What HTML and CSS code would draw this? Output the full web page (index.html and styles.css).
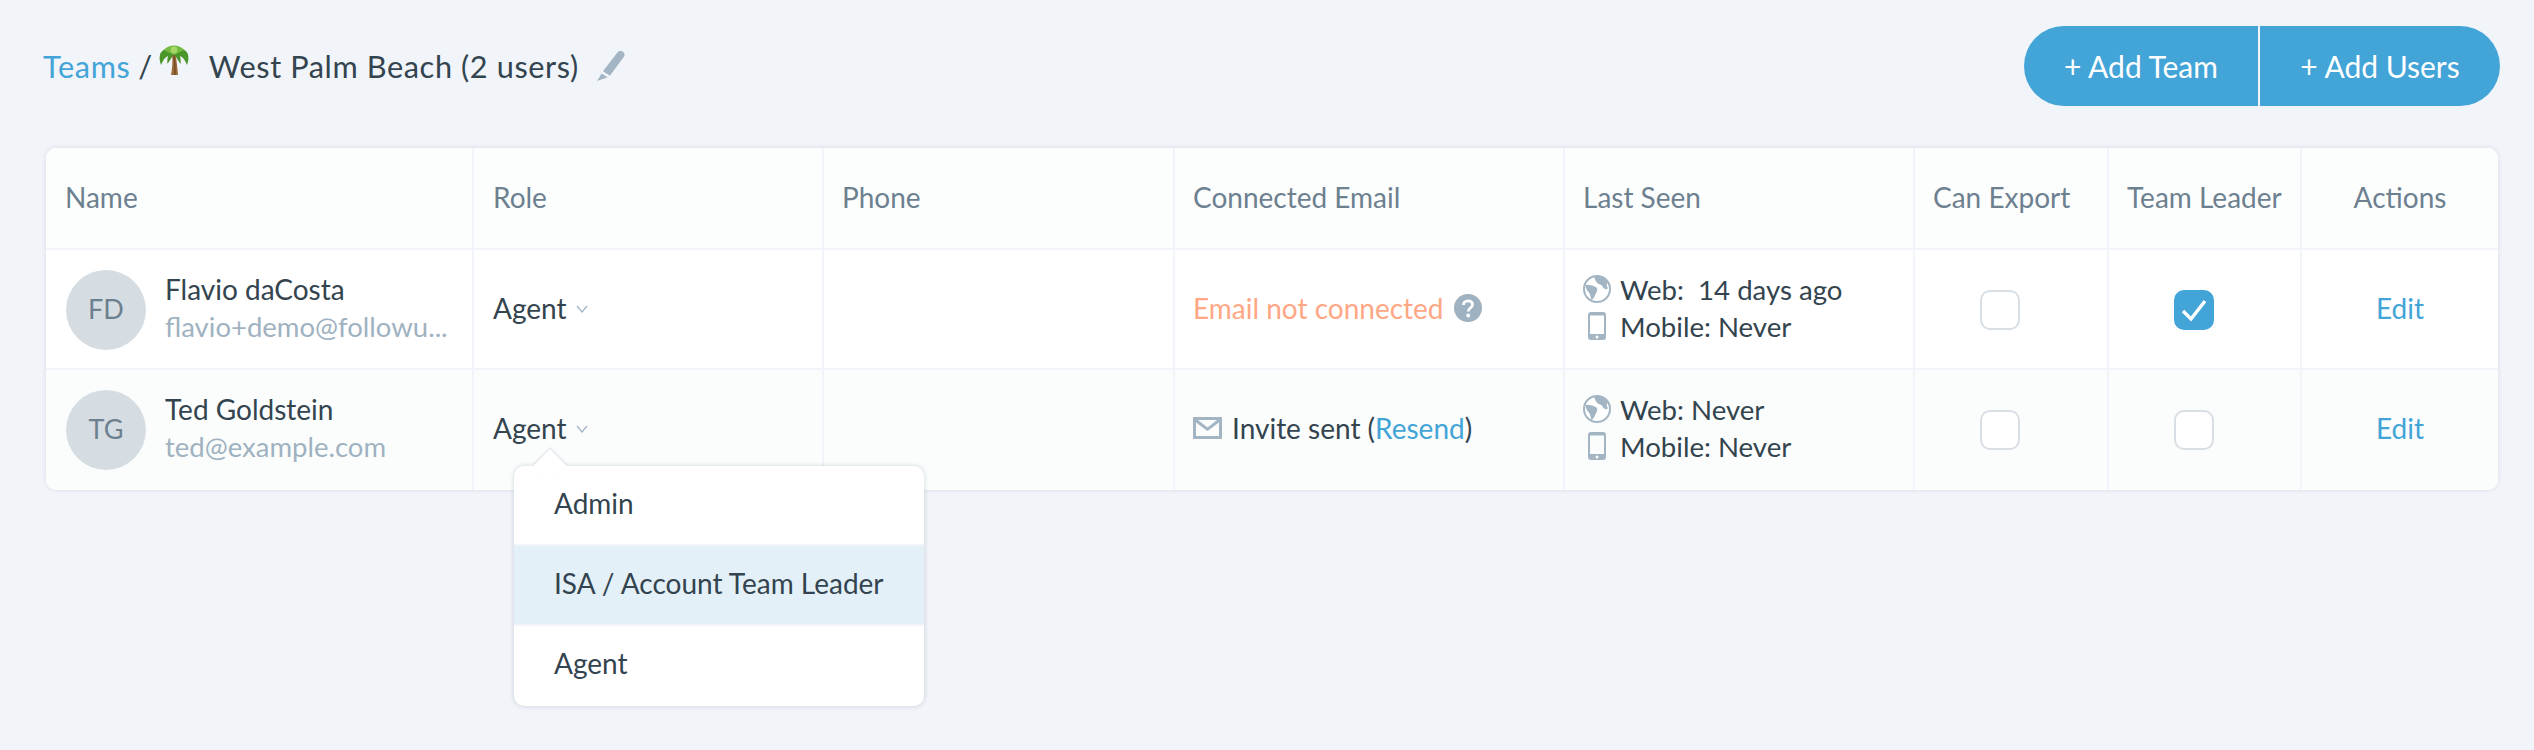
FILE: index.html
```html
<!DOCTYPE html>
<html lang="en">
<head>
    <meta charset="UTF-8">
    <title>Teams</title>
    <link rel="stylesheet" href="styles.css">
</head>
<body>
<div class="page">
    <div class="top-bar">
        <div class="crumbs">
            <a class="link" href="#">Teams</a>
            <span class="slash">/</span>
            <svg class="palm" viewBox="0 0 30 32">
                <path d="M13 10 C14 17 13 25 12 31 L19 31 C18.5 24 17.5 16 16.5 10 Z" fill="#9a6a3a"/>
                <path d="M15 11 C16 18 16 25 16 31" stroke="#6f4520" stroke-width="1.2" fill="none"/>
                <path d="M15 8 C11 3 5 4 1.5 9 C0 13 0.5 17 2 21 C4 16 6 13 9 12 C8.5 15 8 17 8.5 20 C11 16 13 13 15 10 Z" fill="#4a962a"/>
                <path d="M15 8 C19 3 25 4 28.5 9 C30 13 29.5 17 28 21 C26 16 24 13 21 12 C21.5 15 22 17 21.5 20 C19 16 17 13 15 10 Z" fill="#4a962a"/>
                <path d="M5 6 C9 0 21 0 25 6 C22 8 18 9 15 11 C12 9 8 8 5 6 Z" fill="#74bb42"/>
                <circle cx="15" cy="6" r="3.4" fill="#a3d76a"/>
            </svg>
            <span class="team-name">West Palm Beach (2 users)</span>
            <svg class="pencil" viewBox="0 0 28 28">
                <path d="M20 1.5 a3.6 3.6 0 0 1 6.2 3.6 L13 23 L6.5 19 Z" fill="#a3b5c3"/>
                <path d="M5.3 21 L10.8 24.4 L1 28 Z" fill="#a3b5c3"/>
            </svg>
        </div>
        <div class="btn-group">
            <button class="btn btn-team">+ Add Team</button>
            <button class="btn btn-users">+ Add Users</button>
        </div>
    </div>

    <div class="table-wrap">
    <table class="users">
        <colgroup>
            <col class="c-name"><col class="c-role"><col class="c-phone"><col class="c-email">
            <col class="c-seen"><col class="c-export"><col class="c-leader"><col class="c-actions">
        </colgroup>
        <thead>
            <tr>
                <th>Name</th>
                <th>Role</th>
                <th>Phone</th>
                <th>Connected Email</th>
                <th>Last Seen</th>
                <th>Can Export</th>
                <th>Team Leader</th>
                <th class="center">Actions</th>
            </tr>
        </thead>
        <tbody>
            <tr>
                <td class="no-nudge">
                    <div class="person">
                        <div class="avatar">FD</div>
                        <div class="who">
                            <div class="line">Flavio daCosta</div>
                            <div class="line muted">flavio+demo@followu...</div>
                        </div>
                    </div>
                </td>
                <td>
                    <span class="role">Agent
                        <svg class="chevron" viewBox="0 0 12 8"><path d="M1 1 L6 7 L11 1" fill="none" stroke="#a3b5c3" stroke-width="1.3"/></svg>
                    </span>
                </td>
                <td></td>
                <td>
                    <div class="mail-state">
                        <span class="warn">Email not connected</span>
                        <svg class="help" viewBox="0 0 28 28">
                            <circle cx="14" cy="14" r="14" fill="#9fb2c1"/>
                            <path d="M9.5 11 C9.5 5.5 18.5 5.5 18.5 10.5 C18.5 14 14.2 14 14.2 17.5" fill="none" stroke="#fff" stroke-width="2.8"/>
                            <circle cx="14.2" cy="21.5" r="1.9" fill="#fff"/>
                        </svg>
                    </div>
                </td>
                <td>
                    <div class="line seen"><svg class="globe" viewBox="0 0 28 28"><use href="#globe-art"/></svg><span>Web:&nbsp; 14 days ago</span></div>
                    <div class="line seen"><svg class="mobile" viewBox="0 0 28 28"><use href="#phone-art"/></svg><span>Mobile: Never</span></div>
                </td>
                <td class="check-cell"><span class="check"></span></td>
                <td class="check-cell">
                    <span class="check on">
                        <svg viewBox="0 0 40 40"><path d="M9 21 L17 29 L31 11" fill="none" stroke="#fff" stroke-width="3.4"/></svg>
                    </span>
                </td>
                <td class="center"><a class="link" href="#">Edit</a></td>
            </tr>
            <tr class="alt">
                <td class="no-nudge">
                    <div class="person">
                        <div class="avatar">TG</div>
                        <div class="who">
                            <div class="line">Ted Goldstein</div>
                            <div class="line muted">ted@example.com</div>
                        </div>
                    </div>
                </td>
                <td>
                    <span class="role">Agent
                        <svg class="chevron" viewBox="0 0 12 8"><path d="M1 1 L6 7 L11 1" fill="none" stroke="#a3b5c3" stroke-width="1.3"/></svg>
                    </span>
                </td>
                <td></td>
                <td>
                    <div class="mail-state">
                        <svg class="envelope" viewBox="0 0 29 22">
                            <path d="M0 0 H29 V22 H0 Z M3 5.5 V19 H26 V5.5 L14.5 14 Z M5 3 L14.5 10.5 L24 3 Z" fill="#a3b5c3" fill-rule="evenodd"/>
                        </svg>
                        <span>Invite sent (<a class="link" href="#">Resend</a>)</span>
                    </div>
                </td>
                <td>
                    <div class="line seen"><svg class="globe" viewBox="0 0 28 28"><use href="#globe-art"/></svg><span>Web: Never</span></div>
                    <div class="line seen"><svg class="mobile" viewBox="0 0 28 28"><use href="#phone-art"/></svg><span>Mobile: Never</span></div>
                </td>
                <td class="check-cell"><span class="check"></span></td>
                <td class="check-cell"><span class="check"></span></td>
                <td class="center"><a class="link" href="#">Edit</a></td>
            </tr>
        </tbody>
    </table>
    <div class="menu">
        <div class="menu-item">Admin</div>
        <div class="menu-item active">ISA / Account Team Leader</div>
        <div class="menu-item">Agent</div>
    </div>
    </div>
</div>

<svg class="defs" width="0" height="0">
    <defs>
        <g id="globe-art">
            <circle cx="14" cy="14" r="13" fill="#fff" stroke="#a3b5c3" stroke-width="2"/>
            <path d="M11 1.5 C15 1 22 2 25.5 7.5 C23 9 23.5 11 25 13 C23.5 15.5 22 14 20 12.5 C19.5 9.5 16 9.5 14 8 C13 6 11.5 4 11 1.5 Z" fill="#a3b5c3"/>
            <path d="M2.5 10 C5 9 10 10.5 13 12 C15 13.5 14.5 16 13 18 C12 21 10.5 24 8.5 25.5 C7.5 22 7.5 19 5.5 17 C4 15.5 2.5 13 2.5 10 Z" fill="#a3b5c3"/>
        </g>
        <g id="phone-art">
            <path d="M8 0 H20 a3 3 0 0 1 3 3 V25 a3 3 0 0 1 -3 3 H8 a3 3 0 0 1 -3 -3 V3 a3 3 0 0 1 3 -3 Z M7 3.5 V22 H21 V3.5 Z" fill="#a3b5c3" fill-rule="evenodd"/>
            <circle cx="14" cy="25" r="1.5" fill="#fff"/>
        </g>
    </defs>
</svg>
</body>
</html>
```

FILE: styles.css
```css
body {
    margin: 0;
    background: #f1f4f9;
    color: #33444f;
    font-family: "Lato", "Liberation Sans", sans-serif;
    font-size: 28px;
}
.page {
    box-sizing: border-box;
    min-height: 750px;
    padding: 26px 36px 0 46px;
}
.link {
    color: #43a4d7;
    text-decoration: none;
}
.defs {
    position: absolute;
}

/* top bar */
.top-bar {
    display: flex;
    justify-content: space-between;
    align-items: center;
    height: 80px;
    margin-bottom: 42px;
    margin-right: -2px;
}
.crumbs {
    display: flex;
    align-items: center;
    margin-left: -3px;
    font-size: 30.7px;
    letter-spacing: 0.6px;
}
.slash {
    margin-left: 8px;
}
.palm {
    width: 30px;
    height: 32px;
    margin: -12px 20px 0 6px;
}
.pencil {
    width: 30px;
    height: 30px;
    margin: 0 0 0 17px;
}
.btn-group {
    display: flex;
}
.btn {
    height: 80px;
    border: 0;
    background: #43a4d7;
    color: #fff;
    font: inherit;
    font-size: 30px;
    padding: 0;
}
.btn-team {
    width: 234px;
    border-radius: 40px 0 0 40px;
}
.btn-users {
    width: 240px;
    margin-left: 2px;
    border-radius: 0 40px 40px 0;
}

/* table */
.table-wrap {
    position: relative;
}
.users {
    width: 2452px;
    table-layout: fixed;
    border-collapse: separate;
    border-spacing: 0;
    background: #fff;
    border-radius: 10px;
    box-shadow: 0 0 4px rgba(120, 140, 160, 0.22);
}
.c-name { width: 428px; }
.c-role { width: 350px; }
.c-phone { width: 351px; }
.c-email { width: 390px; }
.c-seen { width: 350px; }
.c-export { width: 194px; }
.c-leader { width: 193px; }
.c-actions { width: 196px; }
th, td {
    box-sizing: border-box;
    padding: 0 0 5px 18px;
    text-align: left;
    font-weight: 400;
    border-right: 2px solid #f1f4f8;
    box-shadow: inset 0 -2px 0 #f1f4f8;
    vertical-align: middle;
}
th:last-child, td:last-child {
    border-right: 0;
}
tbody tr:last-child td {
    box-shadow: none;
}
th {
    height: 102px;
    color: #6d8090;
    font-size: 28px;
    background: #fcfefd;
}
th:first-child {
    padding-left: 19px;
    border-top-left-radius: 10px;
}
th:last-child {
    border-top-right-radius: 10px;
}
td {
    height: 120px;
}
td:first-child {
    padding-left: 20px;
}
td:nth-child(2), th:nth-child(2) {
    padding-left: 19px;
}
.alt td {
    background: #fbfdfd;
}
.alt td:first-child {
    border-bottom-left-radius: 10px;
}
.alt td:last-child {
    border-bottom-right-radius: 10px;
}
th.center, td.center {
    padding-left: 0;
    text-align: center;
}
td.no-nudge {
    padding-bottom: 0;
}
td.check-cell {
    padding: 0 0 0 65px;
}

/* cells */
.person {
    display: flex;
    align-items: center;
    gap: 19px;
}
.who {
    margin-top: -5px;
}
.avatar {
    width: 80px;
    height: 80px;
    flex: none;
    border-radius: 50%;
    background: #d6dde2;
    color: #6d8090;
    font-size: 27px;
    line-height: 78px;
    text-align: center;
}
.line {
    line-height: 37px;
    white-space: nowrap;
}
.muted {
    color: #9fb2c1;
    font-size: 27.5px;
}
.role {
    display: inline-flex;
    align-items: center;
    gap: 9px;
}
.chevron {
    width: 12px;
    height: 8px;
    margin-top: 3px;
}

/* role dropdown */
.menu {
    position: absolute;
    top: 318px;
    left: 468px;
    z-index: 2;
    width: 410px;
    background: #fff;
    border-radius: 10px;
    box-shadow: 0 0 5px rgba(100, 120, 140, 0.3);
}
.menu::before {
    content: "";
    position: absolute;
    top: -12px;
    left: 24px;
    width: 24px;
    height: 24px;
    background: #fff;
    transform: rotate(45deg);
    box-shadow: -1px -1px 2px rgba(100, 120, 140, 0.22);
}
.menu-item {
    position: relative;
    height: 78px;
    line-height: 74px;
    padding-left: 40px;
    border-bottom: 2px solid #f1f4f8;
}
.menu-item:first-child {
    border-radius: 10px 10px 0 0;
}
.menu-item:last-child {
    height: 80px;
    border-bottom: 0;
    border-radius: 0 0 10px 10px;
}
.menu-item.active {
    background: #e3f0f8;
}

.mail-state {
    display: flex;
    align-items: center;
    gap: 10px;
}
.warn {
    color: #ffa784;
}
.help {
    width: 28px;
    height: 28px;
}
.envelope {
    width: 29px;
    height: 22px;
}
.seen {
    display: flex;
    align-items: center;
    gap: 9px;
    font-size: 27.6px;
}
.seen svg {
    width: 28px;
    height: 28px;
    flex: none;
}
.check {
    display: block;
    box-sizing: border-box;
    width: 40px;
    height: 40px;
    border: 2px solid #d8dfe4;
    border-radius: 10px;
    background: #fff;
}
.check.on {
    border: 0;
    background: #43a4d7;
}
.check svg {
    display: block;
}
```
